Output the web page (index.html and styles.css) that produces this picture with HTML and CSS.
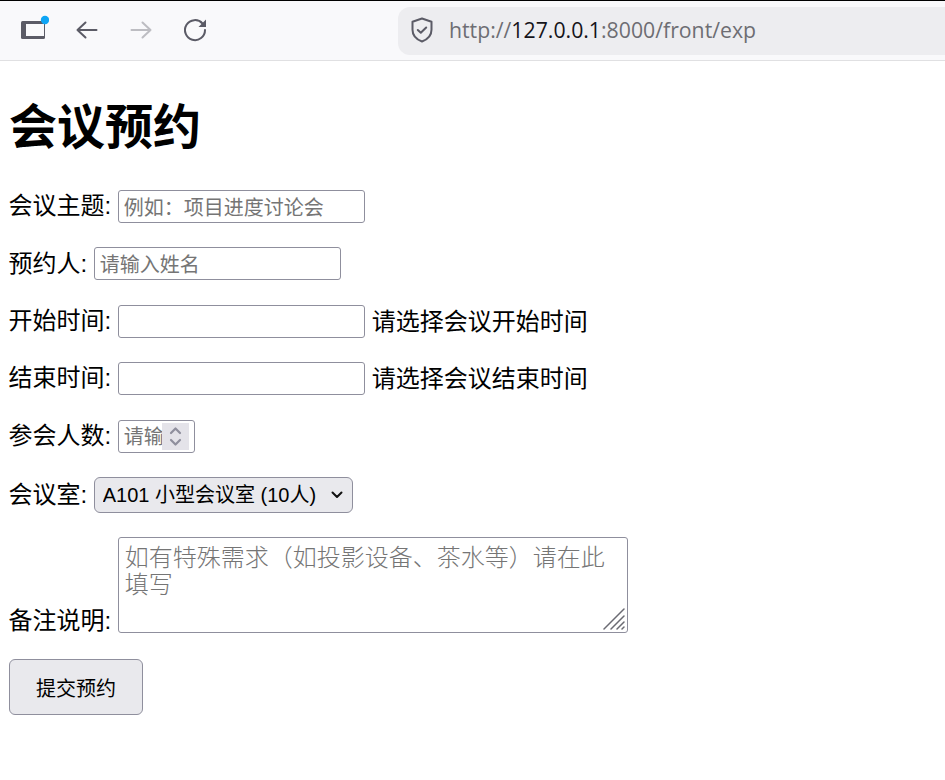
FILE: index.html
```html
<!DOCTYPE html>
<html lang="zh-CN">
<head>
<meta charset="utf-8">
<title>会议预约</title>
<link rel="stylesheet" href="styles.css">
</head>
<body>
<header class="toolbar">
  <div class="nav">
    <span class="tool tool-tabs">
      <svg width="30" height="30" viewBox="0 0 30 30"><path d="M3.500 6H26v16.500a1.500 1.500 0 0 1-1.500 1.500h-21A1.500 1.500 0 0 1 2 22.500v-15A1.500 1.500 0 0 1 3.500 6z" fill="#5b5b66"/><rect x="7" y="9" width="18" height="12" fill="#f9f9fb"/><circle cx="26" cy="5" r="4.200" fill="#0ea5f5"/></svg>
    </span>
    <span class="tool">
      <svg width="30" height="30" viewBox="0 0 30 30" fill="none" stroke="#5b5b66" stroke-width="2" stroke-linecap="round" stroke-linejoin="round"><path d="M4.500 15h19M12.500 7.500L4.500 15l8 7.500"/></svg>
    </span>
    <span class="tool">
      <svg width="30" height="30" viewBox="0 0 30 30" fill="none" stroke="#bdbdc2" stroke-width="2" stroke-linecap="round" stroke-linejoin="round"><path d="M4.500 15h19M15.500 7.500l8 7.500-8 7.500"/></svg>
    </span>
    <span class="tool">
      <svg width="30" height="30" viewBox="0 0 30 30" fill="none"><path d="M21.500 8.500A10 10 0 1 0 24 15" stroke="#5b5b66" stroke-width="2" stroke-linecap="round"/><path d="M25 4.500V12h-7.500z" fill="#5b5b66"/></svg>
    </span>
  </div>
  <div class="urlbar">
    <svg class="shield" width="26" height="28" viewBox="0 0 26 28" fill="none" stroke="#5b5b66" stroke-width="2" stroke-linejoin="round" stroke-linecap="round"><path d="M13 2.500l9.500 3.300v8c0 5.700-4 9.700-9.500 11.700-5.500-2-9.500-6-9.500-11.700v-8z"/><path d="M8.800 14l3 2.800 5.400-5.300"/></svg>
    <span class="url">http://<span class="host">127.0.0.1</span>:8000/front/exp</span>
  </div>
</header>
<main class="page">
  <h1 class="title">会议预约</h1>
  <form class="form">
    <div class="row">
      <label class="label">会议主题:</label>
      <input class="field" type="text" placeholder="例如：项目进度讨论会">
    </div>
    <div class="row">
      <label class="label">预约人:</label>
      <input class="field" type="text" placeholder="请输入姓名">
    </div>
    <div class="row">
      <label class="label">开始时间:</label>
      <input class="field" type="text">
      <span class="hint">请选择会议开始时间</span>
    </div>
    <div class="row">
      <label class="label">结束时间:</label>
      <input class="field" type="text">
      <span class="hint">请选择会议结束时间</span>
    </div>
    <div class="row">
      <label class="label">参会人数:</label>
      <span class="number">
        <input class="number-input" type="text" placeholder="请输入人数">
        <span class="spin">
          <svg width="27" height="27" viewBox="0 0 27 27" fill="none" stroke="#8f8f9d" stroke-width="2.200" stroke-linecap="round" stroke-linejoin="round"><path d="M9 10l4.500-4.500L18 10M9 17l4.500 4.500L18 17"/></svg>
        </span>
      </span>
    </div>
    <div class="row row-select">
      <label class="label">会议室:</label>
      <span class="select-wrap">
        <select class="select"><option>A101 小型会议室 (10人)</option></select>
        <svg class="chev" width="14" height="10" viewBox="0 0 14 10" fill="none" stroke="#111" stroke-width="2" stroke-linecap="round" stroke-linejoin="round"><path d="M2.500 2.500L7 7l4.500-4.500"/></svg>
      </span>
    </div>
    <div class="row row-area">
      <label class="label">备注说明:</label>
      <span class="area-wrap">
        <textarea class="area" placeholder="如有特殊需求（如投影设备、茶水等）请在此填写"></textarea>
        <svg class="grip" width="22" height="22" viewBox="0 0 22 22" stroke="#6b6b73" stroke-width="1.500" stroke-linecap="round"><path d="M1 21L21 1M8 21L21 8M14 21l7-7M19 21l2-2"/></svg>
      </span>
    </div>
    <button class="submit" type="button">提交预约</button>
  </form>
</main>
</body>
</html>
```

FILE: styles.css
```css
* { box-sizing: border-box; }
html, body { margin: 0; padding: 0; background: #fff; }
body {
  height: 780px;
  overflow: hidden;
  font-family: "Liberation Sans", "Noto Sans CJK SC", sans-serif;
  color: #000;
}

.toolbar {
  height: 61px;
  display: flex;
  align-items: center;
  background: #f9f9fb;
  border-top: 1px solid #000;
  border-bottom: 1px solid #e0e0e2;
}
.nav {
  display: flex;
  align-items: center;
  gap: 24px;
  width: 398px;
  margin-top: -1px;
  padding-left: 19px;
}
.tool { display: flex; width: 30px; height: 30px; }
.urlbar {
  flex: 1;
  height: 48px;
  display: flex;
  align-items: center;
  gap: 14px;
  padding-left: 11px;
  background: #ededf0;
  border-radius: 12px 0 0 12px;
}
.shield { margin-bottom: 1px; }
.url {
  margin-bottom: 3px;
  font-family: "Open Sans", "Noto Sans", sans-serif;
  font-size: 21.250px;
  color: #6d6d73;
}
.host { color: #15141a; }

.page { padding: 0 8.5px; }
.title {
  margin: 0 0 0 0.5px;
  height: 129px;
  padding-top: 37px;
  font-size: 48px;
  line-height: 60px;
  font-weight: 700;
}
.row {
  display: flex;
  align-items: center;
  gap: 6.5px;
  height: 33px;
  margin-bottom: 24.4px;
  font-size: 24px;
}
.label { line-height: 32px; margin-bottom: 0.4px; }
.hint { line-height: 33px; margin-left: 0.5px; }
.field {
  width: 247px;
  height: 33px;
  padding: 3px 5px 0;
  border: 1px solid #8f8f9d;
  border-radius: 3px;
  background: #fff;
  font: 20px "Liberation Sans", "Noto Sans CJK SC", sans-serif;
}
.field::placeholder, .number-input::placeholder, .area::placeholder {
  color: #757575;
  opacity: 1;
}
.number {
  display: flex;
  width: 77px;
  height: 33px;
  padding: 2px 5px;
  border: 1px solid #8f8f9d;
  border-radius: 3px;
}
.number-input {
  width: 38px;
  padding: 2px 0 0;
  border: 0;
  outline: 0;
  background: transparent;
  font: 20px "Liberation Sans", "Noto Sans CJK SC", sans-serif;
}
.spin { display: flex; width: 27px; height: 27px; background: #e4e3e9; }

.row-select { height: 36px; margin-bottom: 24px; }
.select-wrap { position: relative; display: flex; }
.select {
  appearance: none;
  width: 259px;
  height: 36px;
  padding: 0 8px;
  border: 1px solid #8f8f9d;
  border-radius: 6px;
  background: #e9e9ed;
  color: #000;
  font: 20px "Liberation Sans", "Noto Sans CJK SC", sans-serif;
}
.chev { position: absolute; right: 9px; top: 13px; pointer-events: none; }

.row-area { height: 96px; align-items: flex-end; margin-bottom: 26px; }
.row-area .label { line-height: 24px; margin-bottom: 0; }
.area-wrap { position: relative; display: flex; }
.area {
  display: block;
  width: 510px;
  height: 96px;
  padding: 4px 6px;
  border: 1px solid #8f8f9d;
  border-radius: 3px;
  background: #fff;
  resize: none;
  font: 300 24px/27px "Noto Sans CJK SC", sans-serif;
}
.grip { position: absolute; right: 3px; bottom: 3px; pointer-events: none; }

.submit {
  display: block;
  width: 134px;
  height: 56px;
  margin-left: 0.5px;
  padding: 1px 0 0;
  border: 1px solid #8f8f9d;
  border-radius: 6px;
  background: #e9e9ed;
  color: #000;
  font: 20px "Liberation Sans", "Noto Sans CJK SC", sans-serif;
}
```
